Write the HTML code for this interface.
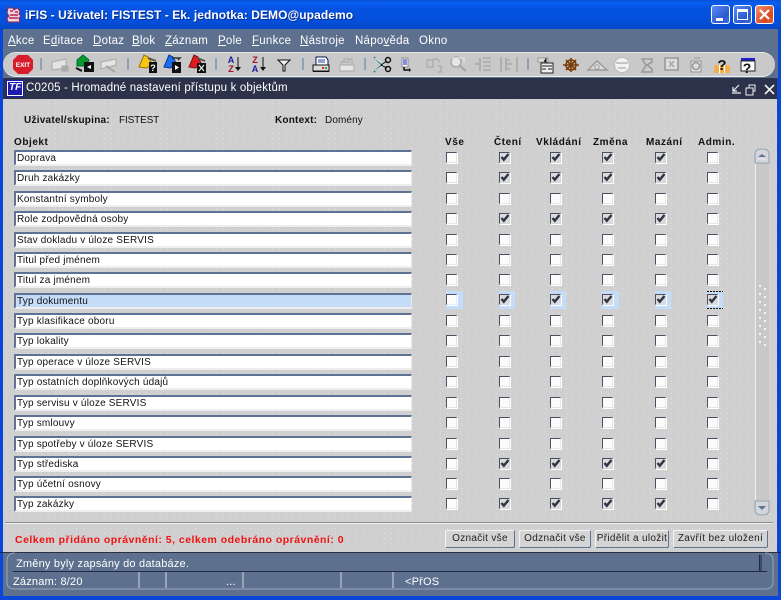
<!DOCTYPE html>
<html><head><meta charset="utf-8"><style>
*{box-sizing:border-box}
html,body{margin:0;padding:0;width:781px;height:600px;overflow:hidden;background:#0a46d8}
body{position:relative;font-family:"Liberation Sans",sans-serif;font-size:10px;color:#111}
.a{position:absolute;white-space:nowrap}
.b{font-weight:bold;color:#111}
#title{left:0;top:0;width:781px;height:29px;background:linear-gradient(#0a50d8 0,#0a5ef0 10%,#0553e0 30%,#0450dc 70%,#0648c8 100%)}
#tt{left:25px;top:8px;color:#fff;font-weight:bold;font-size:12px;letter-spacing:.07px;text-shadow:1px 1px 0 #0a2f90}
.wb{top:5px;width:19px;height:19px;border:1px solid #fff;border-radius:3px;background:linear-gradient(135deg,#5a8cf0,#2a58d0 70%,#3c70e0)}
#menu{left:3px;top:29px;width:775px;height:24px;background:#5d708e}
.m{top:35px;color:#fff;font-size:11.5px;letter-spacing:.25px}
.m u{text-decoration:underline}
#tb{left:3px;top:52px;width:772px;height:25px;background:#c9c9c9;border-radius:13px;border-top:1px solid #e6e6e6;border-bottom:1px solid #f0f0f0}
#tbbg{left:3px;top:52px;width:775px;height:26px;background:#5d708e}
#wt{left:3px;top:78px;width:774px;height:21px;background:#2b3249}
#wtt{left:26px;top:82px;color:#fff;font-size:11.5px;letter-spacing:.16px}
#c{left:3px;top:99px;width:774px;height:453px;background:#d0d0d0}
.f{position:absolute;left:14px;width:398px;height:16px;background:#fff;border:2px solid;border-color:#5d7396 #e8e8e8 #eeeeee #5d7396;border-right-width:1px;border-bottom-width:2px;font-size:10px;line-height:14px;padding-left:1px;letter-spacing:.2px;color:#111;white-space:nowrap;border-radius:1px}
.btn{position:absolute;top:530px;height:18px;background:#d4d4d4;border:1px solid;border-color:#f4f4f4 #5d7396 #5d7396 #f4f4f4;font-size:10px;letter-spacing:.32px;line-height:15px;text-align:center;color:#222;border-radius:2px;white-space:nowrap}
#st{left:3px;top:552px;width:775px;height:44px;background:#5d708e}
.s{color:#fff;font-size:11px;letter-spacing:.2px}
.h{top:137px;letter-spacing:.55px}
</style></head><body>

<div class="a" id="title"></div>
<svg class="a" style="left:5px;top:6px" width="18" height="18" viewBox="0 0 18 18"><path d="M3 2h5l1 2 3-2 3 3-1 3 2 2-2 2 1 4H3l-1-4 2-2-2-3z" fill="#e8d8e8" stroke="#a02040" stroke-width="1"/><path d="M5 5h3M10 6h3M5 9h8M4 12h9" stroke="#c02050" stroke-width="1.4"/></svg>
<div class="a" id="tt">iFIS - Uživatel: FISTEST - Ek. jednotka: DEMO@upademo</div>
<div class="a wb" style="left:711px"><div class="a" style="left:4px;top:12px;width:7px;height:3px;background:#fff"></div></div>
<div class="a wb" style="left:733px"><div class="a" style="left:3px;top:3px;width:11px;height:11px;border:1px solid #fff;border-top-width:3px"></div></div>
<div class="a wb" style="left:755px;background:linear-gradient(135deg,#f09070,#d84a20 70%,#e06030)"><svg class="a" style="left:3px;top:3px" width="11" height="11"><path d="M1 1l9 9M10 1l-9 9" stroke="#fff" stroke-width="2.2"/></svg></div>

<div class="a" id="menu"></div>
<div class="a m" style="left:8px"><u>A</u>kce</div>
<div class="a m" style="left:43px">E<u>d</u>itace</div>
<div class="a m" style="left:93px"><u>D</u>otaz</div>
<div class="a m" style="left:132px"><u>B</u>lok</div>
<div class="a m" style="left:165px"><u>Z</u>áznam</div>
<div class="a m" style="left:218px"><u>P</u>ole</div>
<div class="a m" style="left:252px"><u>F</u>unkce</div>
<div class="a m" style="left:300px"><u>N</u>ástroje</div>
<div class="a m" style="left:355px">Nápo<u>v</u>ěda</div>
<div class="a m" style="left:419px">Okno</div>

<div class="a" id="tbbg"></div>
<div class="a" id="tb"></div>
<svg class="a" style="left:0;top:52px" width="781" height="26" viewBox="0 52 781 26">
<g stroke="#7d93b8" stroke-width="1.5"><path d="M41 58v12M128 58v12M216 58v12M303 58v12M365 58v12M528 58v12"/></g>
<path d="M18 55h10l5 5v9l-5 5H18l-5-5v-9z" fill="#d81c2c"/>
<text x="23" y="67" font-family="Liberation Sans" font-size="6.5" font-weight="bold" fill="#fff" text-anchor="middle">EXIT</text>
<g fill="#e4e4e4" stroke="#a8a8a8"><path d="M52 62l14-3v9l-14 2z"/><path d="M62 66h6v5h-6z" fill="#aaa"/><path d="M101 62l15-3v6l-15 4z"/><path d="M106 66l9 6" stroke-width="2"/></g>
<path d="M77 60l6-5 6 5-3 6h-9z" fill="#0a9a2a" stroke="#064"/><path d="M84 62h10v10H84z" fill="#111"/><path d="M91 65l-4 2 4 2z" fill="#fff"/><path d="M76 68l6 3" stroke="#111" stroke-width="2"/>
<path d="M139 67l5-12 4 2 5 8-7 3z" fill="#f4c810" stroke="#a07000"/><path d="M149 62h8v11h-8z" fill="#111"/><text x="153" y="71" font-size="9" font-weight="bold" fill="#fff" text-anchor="middle" font-family="Liberation Sans">?</text><path d="M148 58l8 3" stroke="#555" stroke-width="2"/>
<path d="M164 67l5-12 4 2 4 8-7 3z" fill="#1c6cf0" stroke="#043a90"/><path d="M172 62h9v11h-9z" fill="#111"/><path d="M175 65l4 2.5-4 2.5z" fill="#fff"/><path d="M172 58h8l-2 2" stroke="#333" stroke-width="1.5" fill="none"/>
<path d="M189 67l5-12 4 2 4 8-7 3z" fill="#e01c20" stroke="#801010"/><path d="M197 63h9v10h-9z" fill="#111"/><path d="M199 65l5 6M204 65l-5 6" stroke="#fff"/><path d="M197 58l8 3" stroke="#555" stroke-width="2"/>
<text x="231" y="63" font-size="9" font-weight="bold" fill="#1a1a9a" text-anchor="middle" font-family="Liberation Sans">A</text><text x="231" y="72" font-size="9" font-weight="bold" fill="#a01020" text-anchor="middle" font-family="Liberation Sans">Z</text><path d="M238 57v12" stroke="#111"/><path d="M235 67h6l-3 4z" fill="#111"/>
<text x="255" y="63" font-size="9" font-weight="bold" fill="#a01020" text-anchor="middle" font-family="Liberation Sans">Z</text><text x="255" y="72" font-size="9" font-weight="bold" fill="#1a1a9a" text-anchor="middle" font-family="Liberation Sans">A</text><path d="M263 57v12" stroke="#111"/><path d="M260 67h6l-3 4z" fill="#111"/>
<path d="M278 60h12l-5 5v6h-2v-6z" fill="#eee" stroke="#111"/>
<path d="M316 57h10l2 3v5h-12z" fill="#fff" stroke="#115"/><path d="M318 60h7M318 62h7" stroke="#24a"/><path d="M313 65h16v6h-16z" fill="#ddd" stroke="#111"/><path d="M313 71h16v1h-16z" fill="#111"/><path d="M322 67h2v2h-2z" fill="#d22"/><path d="M325 67h2v2h-2z" fill="#2a2"/>
<path d="M341 65v-3h8v-3h3v6M344 62v-3h6" stroke="#aaa" fill="none"/><path d="M340 65h14v6h-14z" fill="#e6e6e6" stroke="#aaa"/>
<path d="M374 57l8 8-8 7" stroke="#2a7a80" stroke-width="1.5" fill="none"/><path d="M375 58l9 7-9 6" stroke="#d8f0f0" stroke-width="1" fill="none"/><circle cx="388" cy="60" r="2.5" fill="none" stroke="#111" stroke-width="1.5"/><circle cx="388" cy="69" r="2.5" fill="none" stroke="#111" stroke-width="1.5"/><path d="M381 65l6-4M381 65l6 3" stroke="#111"/>
<path d="M402 58h6v9h-6z" fill="#fff" stroke="#888"/><path d="M403 60h4M403 62h4M403 64h4" stroke="#12c"/><path d="M404 67v3h6" stroke="#111" stroke-width="1.5" fill="none"/><path d="M409 68v4l2-2z" fill="#111"/>
<g fill="none" stroke="#a4a4a4"><path d="M427 60h6v7h-6zM433 59h4l3 3M438 66h3v6h-3"/>
<circle cx="456" cy="62" r="5" fill="#e6e6e6" stroke="#aaa" stroke-width="1.5"/><path d="M460 66l6 5" stroke-width="2"/><path d="M452 58h12v5" stroke="#e8e8e8"/>
<path d="M480 58v13" stroke-width="1.5"/><path d="M483 58h8M483 62h8M483 66h8M483 70h8" stroke-width="1.3"/><path d="M475 64h4" stroke-width="1.5"/>
<path d="M501 57v15M506 58v13" stroke-width="1.4"/><path d="M507 60h3M507 64h5M507 69h3M517 57v15" stroke-width="1.3"/></g>
<path d="M538 58h10v4h-10z" fill="#e0e0e0" stroke="#999"/><path d="M541 63h12v10h-12z" fill="#eee" stroke="#222"/><path d="M542 66h10M542 69h4M548 69h4" stroke="#222"/><path d="M546 58v4l-2-1" stroke="#222"/>
<g stroke="#7a3c08" stroke-width="1.6" fill="none"><circle cx="571" cy="65" r="5"/><path d="M563 65h16M571 58v14M566 60l10 10M576 60l-10 10"/></g>
<g fill="none" stroke="#999"><path d="M588 70l9-9 10 9z" fill="#ddd" stroke-width="1.4"/><circle cx="597" cy="67" r="2.2"/>
<circle cx="622" cy="65" r="7.5" fill="#f2f2f2" stroke="#bbb"/><path d="M618 68h8M616 63h12" stroke="#999"/>
<path d="M642 59h10v3l-5 3 5 4v3h-10l4-7z" stroke-width="1.6" fill="#ccc"/>
<path d="M665 58h13v12h-13z" stroke-width="1.6" fill="#ddd"/><path d="M669 61l5 6M674 61l-5 6"/>
<path d="M691 61h10v11h-10z" fill="#ddd"/><circle cx="696" cy="66" r="3.5" stroke-width="1.5"/><path d="M694 58h6"/></g>
<path d="M714 65h16v8h-16z" fill="#f0b050"/><path d="M719 65h1v8h-1M724 65h1v8h-1z" fill="#fff"/><text x="722" y="70" font-size="15" font-weight="bold" fill="#111" text-anchor="middle" font-family="Liberation Sans">?</text>
<path d="M741 58h14v3h-14z" fill="#2020c0"/><path d="M741 61h14v10h-14z" fill="#fff" stroke="#222"/><text x="747" y="73" font-size="14" font-weight="bold" fill="#111" text-anchor="middle" font-family="Liberation Sans">?</text>
</svg>

<div class="a" id="wt"></div>
<svg class="a" style="left:6px;top:80px" width="18" height="17"><rect x="0.5" y="0.5" width="17" height="16" fill="#fff" stroke="#1a1ab0"/><rect x="2" y="2" width="14" height="13" fill="#1c1cb0"/></svg>
<div class="a" style="left:9px;top:82px;color:#fff;font:italic bold 10px 'Liberation Sans',sans-serif">TF</div>
<div class="a" id="wtt">C0205 - Hromadné nastavení přístupu k objektům</div>
<svg class="a" style="left:728px;top:82px" width="48" height="15" fill="none" stroke="#f0f0f0"><path d="M4 11h9M5 9l6-6M5 5v4h4" stroke-width="1.2"/><path d="M18 6h7v7h-7zM21 6V3h6v6h-2"/><path d="M37 3l9 9M46 3l-9 9" stroke-width="1.6"/></svg>

<div class="a" id="c"></div>
<svg class="a" style="left:3px;top:99px" width="774" height="453"><defs><pattern id="d" width="7" height="5" patternUnits="userSpaceOnUse"><rect x="1" y="1" width="1" height="1" fill="#dcc8c8"/><rect x="5" y="3" width="1" height="1" fill="#c4c8d4"/><rect x="3" y="4" width="1" height="1" fill="#dddddd"/></pattern></defs><rect width="774" height="453" fill="url(#d)"/></svg>

<div class="a b" style="left:24px;top:115px;font-size:10px;letter-spacing:.25px">Uživatel/skupina:</div>
<div class="a" style="left:119px;top:115px;letter-spacing:-.15px">FISTEST</div>
<div class="a b" style="left:275px;top:115px;letter-spacing:.2px">Kontext:</div>
<div class="a" style="left:325px;top:115px;letter-spacing:.1px">Domény</div>
<div class="a b h" style="left:14px">Objekt</div>
<div class="a b h" style="left:445px">Vše</div>
<div class="a b h" style="left:494px">Čtení</div>
<div class="a b h" style="left:536px">Vkládání</div>
<div class="a b h" style="left:593px">Změna</div>
<div class="a b h" style="left:646px">Mazání</div>
<div class="a b h" style="left:698px">Admin.</div>

<div class="f" style="top:150px">Doprava</div>
<div class="f" style="top:170px">Druh zakázky</div>
<div class="f" style="top:191px">Konstantní symboly</div>
<div class="f" style="top:211px">Role zodpovědná osoby</div>
<div class="f" style="top:232px">Stav dokladu v úloze SERVIS</div>
<div class="f" style="top:252px">Titul před jménem</div>
<div class="f" style="top:272px">Titul za jménem</div>
<div class="f" style="top:293px;background:#c4dcf8">Typ dokumentu</div>
<div class="f" style="top:313px">Typ klasifikace oboru</div>
<div class="f" style="top:333px">Typ lokality</div>
<div class="f" style="top:354px">Typ operace v úloze SERVIS</div>
<div class="f" style="top:374px">Typ ostatních doplňkových údajů</div>
<div class="f" style="top:395px">Typ servisu v úloze SERVIS</div>
<div class="f" style="top:415px">Typ smlouvy</div>
<div class="f" style="top:436px">Typ spotřeby v úloze SERVIS</div>
<div class="f" style="top:456px">Typ střediska</div>
<div class="f" style="top:476px">Typ účetní osnovy</div>
<div class="f" style="top:496px">Typ zakázky</div>

<svg class="a" style="left:0;top:0" width="781" height="600">
<defs>
<g id="u"><rect x="0.5" y="0.5" width="10" height="10" fill="#fbfbfb"/><path d="M0.5 10.500V.5H10.500" fill="none" stroke="#4a5060"/><path d="M1 11.500h10.500V1" fill="none" stroke="#fff"/></g>
<g id="k"><use href="#u"/><rect x="1" y="1" width="9.500" height="9.500" fill="#dcdcdc"/><path d="M2.500 5l2.300 2.700L9.500 2" fill="none" stroke="#2f3546" stroke-width="2.400"/></g>
<g id="E"><use href="#u" x="446"/><use href="#u" x="499"/><use href="#u" x="550"/><use href="#u" x="602"/><use href="#u" x="655"/><use href="#u" x="707"/></g>
<g id="C"><use href="#u" x="446"/><use href="#k" x="499"/><use href="#k" x="550"/><use href="#k" x="602"/><use href="#k" x="655"/><use href="#u" x="707"/></g>
</defs>
<use href="#C" y="152"/><use href="#C" y="172"/><use href="#E" y="193"/><use href="#C" y="213"/><use href="#E" y="234"/><use href="#E" y="254"/><use href="#E" y="274"/>
<g fill="#c4dcf8"><rect x="446" y="291" width="17" height="18"/><rect x="499" y="291" width="16" height="18"/><rect x="550" y="291" width="16" height="18"/><rect x="602" y="291" width="17" height="18"/><rect x="655" y="291" width="16" height="18"/><rect x="707" y="291" width="16" height="18"/></g>
<path d="M707 291.500h16M707 308.500h16" stroke="#111" stroke-dasharray="2 1"/>
<use href="#u" x="446" y="294"/><use href="#k" x="499" y="294"/><use href="#k" x="550" y="294"/><use href="#k" x="602" y="294"/><use href="#k" x="655" y="294"/><use href="#k" x="707" y="294"/>
<use href="#E" y="315"/><use href="#E" y="335"/><use href="#E" y="356"/><use href="#E" y="376"/><use href="#E" y="397"/><use href="#E" y="417"/><use href="#E" y="438"/><use href="#C" y="458"/><use href="#E" y="478"/><use href="#C" y="498"/>
<rect x="755" y="163" width="14" height="337" fill="#c8c8c8"/>
<path d="M755.500 500V163" stroke="#eee" stroke-width="1"/>
<path d="M755 163v-9q0-5 7-5t7 5v9z" fill="#d4d6dc" stroke="#8fa0b8"/><path d="M758 157h8l-4-3z" fill="#5d7396"/><path d="M758 159h8" stroke="#eee"/>
<path d="M755 501v9q0 5 7 5t7-5v-9z" fill="#d4d6dc" stroke="#8fa0b8"/><path d="M758 506h8l-4 4z" fill="#5d7396"/>
<g fill="#f4f4f4"><path d="M759 285h2v2h-2zM764 288h2v2h-2zM759 293h2v2h-2zM764 296h2v2h-2zM759 301h2v2h-2zM764 304h2v2h-2zM759 309h2v2h-2zM764 312h2v2h-2zM759 317h2v2h-2zM764 320h2v2h-2zM759 325h2v2h-2zM764 328h2v2h-2zM759 333h2v2h-2zM764 336h2v2h-2zM759 341h2v2h-2zM764 344h2v2h-2z"/></g>
<path d="M5 522.500h768" stroke="#8c9098"/><path d="M5 523.500h768" stroke="#eee"/>
</svg>

<div class="a" style="left:15px;top:534px;color:#f01010;font-weight:bold;font-size:10.500px;letter-spacing:.48px">Celkem přidáno oprávnění: 5, celkem odebráno oprávnění: 0</div>
<div class="btn" style="left:445px;width:70px">Označit vše</div>
<div class="btn" style="left:519px;width:72px">Odznačit vše</div>
<div class="btn" style="left:595px;width:74px">Přidělit a uložit</div>
<div class="btn" style="left:673px;width:95px">Zavřít bez uložení</div>

<div class="a" id="st"></div>
<svg class="a" style="left:0;top:552px" width="781" height="48" fill="none">
<rect x="0" y="44" width="781" height="4" fill="#0a46d8"/>
<path d="M0 0h781" stroke="#161c2c" stroke-width="1.500"/>
<path d="M15 1Q7 1 7 9V30Q7 37 15 37H765Q773 37 773 30V9Q773 1 765 1" stroke="#9aa6ba"/>
<path d="M13 19.500H767" stroke="#1f2a40"/>
<path d="M759.500 3v16M761 3v16" stroke="#1f2a40"/>
<path d="M139 20v16M166 20v16M243 20v16M341 20v16M393 20v16" stroke="#d4dae4"/>
</svg>
<div class="a s" style="left:16px;top:558px">Změny byly zapsány do databáze.</div>
<div class="a s" style="left:13px;top:576px">Záznam: 8/20</div>
<div class="a s" style="left:226px;top:576px">...</div>
<div class="a s" style="left:405px;top:576px">&lt;PřOS</div>
</body></html>
